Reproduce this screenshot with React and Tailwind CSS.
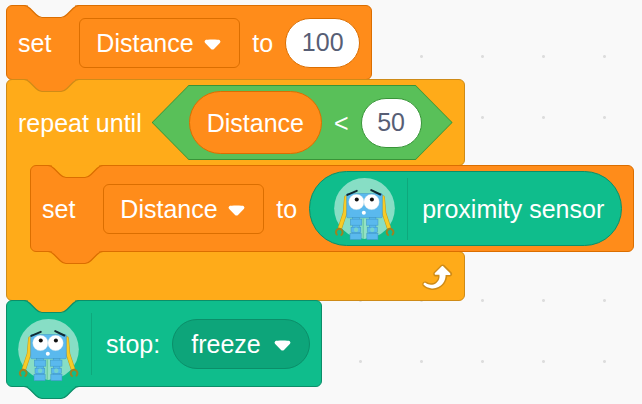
const DROPDOWN_ARROW =
  'M6.36,7.79a1.43,1.43,0,0,1-1-.42L1.42,3.45a1.44,1.44,0,0,1,0-2c0.56-.56,9.31-0.56,9.87,0a1.44,1.44,0,0,1,0,2L7.37,7.37A1.43,1.43,0,0,1,6.36,7.79Z';

// The connector between stacked blocks: a bump of one colour outlined in another.
function Notch({ side = 'top', className }) {
  const place = side === 'top' ? '-top-px' : '-bottom-[13px]';
  return (
    <svg
      aria-hidden="true"
      className={`pointer-events-none absolute left-[17px] z-10 overflow-visible ${place} ${className}`}
      width="55"
      height="13"
      viewBox="0 0 55 13"
    >
      <rect x="4" y="0" width="47" height="2" stroke="none" />
      <path
        d="M0 0.500c3 0 4.500 1.500 6 3l6 6c1.500 1.500 3 3 6 3h19c3 0 4.500-1.500 6-3l6-6c1.500-1.500 3-3 6-3"
        strokeWidth="1.200"
      />
    </svg>
  );
}

function Dropdown({ label, options, className }) {
  return (
    <span className="relative flex">
      <select
        aria-label={label}
        className={`h-[50px] appearance-none border text-white outline-none ${className}`}
      >
        {options.map((o) => (
          <option key={o}>{o}</option>
        ))}
      </select>
      <svg
        aria-hidden="true"
        className="pointer-events-none absolute right-[18px] top-[20px]"
        width="19"
        height="13"
        viewBox="0 0 12.71 8.79"
      >
        <path fill="#fff" d={DROPDOWN_ARROW} />
      </svg>
    </span>
  );
}

function NumberField({ label, value, className }) {
  return (
    <input
      type="text"
      inputMode="numeric"
      aria-label={label}
      defaultValue={value}
      className={`h-[50px] rounded-full border bg-white text-center text-[#575e75] outline-none ${className}`}
    />
  );
}

function Robot({ className = '' }) {
  return (
    <svg
      aria-hidden="true"
      className={`shrink-0 ${className}`}
      width="61"
      height="62"
      viewBox="0 0 180 184"
    >
      <circle cx="90" cy="90" r="90" fill="#87dec5" />
      <g fill="none" strokeLinecap="round" strokeLinejoin="round">
        <path d="M36 58L32 104L18 146" stroke="#c19a1f" strokeWidth="13" />
        <path d="M36 58L32 104L18 146" stroke="#f7cb27" strokeWidth="10" />
        <path d="M144 58L148 104L162 146" stroke="#c19a1f" strokeWidth="13" />
        <path d="M144 58L148 104L162 146" stroke="#f7cb27" strokeWidth="10" />
        <path d="M8 168a10 10 0 1 1 13 1" stroke="#9c8222" strokeWidth="6" />
        <path d="M160 169a10 10 0 1 1 13 -1" stroke="#9c8222" strokeWidth="6" />
      </g>
      <g fill="#5ab9ee" stroke="#3c93c4" strokeWidth="1.500">
        <rect x="37" y="46" width="106" height="72" rx="4" />
        <rect x="55" y="117" width="20" height="50" />
        <rect x="104" y="117" width="20" height="50" />
        <rect x="48" y="122" width="34" height="18" />
        <rect x="96" y="122" width="34" height="18" />
        <rect x="50" y="146" width="29" height="16" />
        <rect x="99" y="146" width="29" height="16" />
        <rect x="47" y="164" width="33" height="19" />
        <rect x="97" y="164" width="33" height="19" />
      </g>
      <rect x="59" y="147" width="12" height="13" rx="5" fill="#74d2cf" />
      <rect x="107" y="147" width="12" height="13" rx="5" fill="#74d2cf" />
      <path d="M88 120V180" stroke="#72cda4" strokeWidth="7" />
      <path d="M91 120V180" stroke="#a6ead1" strokeWidth="3" />
      <circle cx="66" cy="71" r="23" fill="#fff" stroke="#a9cfe2" strokeWidth="1" />
      <circle cx="111" cy="71" r="23" fill="#fff" stroke="#a9cfe2" strokeWidth="1" />
      <circle cx="67" cy="64" r="6" fill="#111" />
      <circle cx="112" cy="64" r="6" fill="#111" />
      <circle cx="88" cy="103" r="6" fill="#fff" />
      <path d="M39 50L67 38" fill="none" stroke="#0f2a33" strokeWidth="6" strokeLinecap="round" />
      <path d="M110 36L137 49" fill="none" stroke="#0f2a33" strokeWidth="6" strokeLinecap="round" />
    </svg>
  );
}

function LoopArrow() {
  return (
    <svg aria-hidden="true" width="37" height="37" viewBox="0 0 24 24">
      <path
        fill="#cf8b17"
        d="M23.3,11c-0.3,0.6-0.9,1-1.5,1h-1.6c-0.1,1.3-0.5,2.5-1.1,3.6c-0.9,1.7-2.3,3.2-4.1,4.1c-1.7,0.9-3.6,1.2-5.5,0.9c-1.8-0.3-3.5-1.1-4.9-2.3c-0.7-0.7-0.7-1.9,0-2.6c0.6-0.6,1.6-0.7,2.3-0.2H7c0.9,0.6,1.9,0.9,2.9,0.9s1.9-0.3,2.7-0.9c1.1-0.8,1.8-2.1,1.8-3.5h-1.5c-0.9,0-1.7-0.7-1.7-1.7c0-0.4,0.2-0.9,0.5-1.2l4.4-4.4c0.7-0.6,1.7-0.6,2.4,0L23,9.2C23.5,9.7,23.6,10.4,23.3,11z"
      />
      <path
        fill="#fff"
        d="M21.8,11h-2.6c0,1.5-0.3,2.9-1,4.2c-0.8,1.6-2.1,2.8-3.7,3.6c-1.5,0.8-3.3,1.1-4.9,0.8c-1.6-0.2-3.2-1-4.4-2.1c-0.4-0.3-0.4-0.9-0.1-1.2c0.3-0.4,0.9-0.4,1.2-0.1l0,0c1,0.7,2.2,1.1,3.4,1.1s2.3-0.3,3.3-1c0.9-0.6,1.6-1.5,2-2.6c0.3-0.9,0.4-1.8,0.2-2.8h-2.4c-0.4,0-0.7-0.3-0.7-0.7c0-0.2,0.1-0.3,0.2-0.4l4.4-4.4c0.3-0.3,0.7-0.3,0.9,0L22,9.8c0.3,0.3,0.4,0.6,0.3,0.9S22,11,21.8,11z"
      />
    </svg>
  );
}

function SetBlock({ above, children, className = '' }) {
  return (
    <div
      className={`relative flex w-max items-center gap-3 rounded-[6px] border border-[#db6e00] bg-[#ff8c1a] px-[11px] ${className}`}
    >
      <Notch className={above} />
      <span className="mr-4">set</span>
      <Dropdown
        label="Variable to set"
        options={['Distance']}
        className="w-[161px] rounded-[6px] border-[#db6e00] bg-[#ff8c1a] pl-4"
      />
      <span>to</span>
      {children}
    </div>
  );
}

function RepeatUntil({ condition, children }) {
  return (
    <div className="relative -mt-px grid w-max">
      <div className="relative flex items-center gap-[10px] rounded-[6px] rounded-bl-none border border-[#cf8b17] bg-[#ffab19] px-[11px] py-[5px]">
        <Notch className="fill-[#ff8c1a] stroke-[#cf8b17]" />
        <span>repeat until</span>
        {condition}
      </div>
      <div className="relative z-10 -my-px flex w-0">
        <div className="-mr-2 w-8 shrink-0 border-l border-[#cf8b17] bg-[#ffab19]" />
        {children}
      </div>
      <div className="flex h-[50px] items-center justify-end rounded-[6px] rounded-tl-none border border-[#cf8b17] bg-[#ffab19] pr-[11px]">
        <LoopArrow />
      </div>
    </div>
  );
}

function LessThan() {
  return (
    <div className="bg-[#389438] p-px [clip-path:polygon(37px_0,calc(100%-37px)_0,100%_50%,calc(100%-37px)_100%,37px_100%,0_50%)]">
      <div className="flex h-[73px] items-center gap-3 bg-[#59c059] pl-9 pr-[30px] [clip-path:polygon(36px_0,calc(100%-36px)_0,100%_50%,calc(100%-36px)_100%,36px_100%,0_50%)]">
        <span className="flex h-[63px] items-center rounded-full border border-[#db6e00] bg-[#ff8c1a] px-[17px]">
          Distance
        </span>
        <span>&lt;</span>
        <NumberField label="Compare with" value="50" className="w-[61px] border-[#389438]" />
      </div>
    </div>
  );
}

export default function App() {
  return (
    <main className="min-h-screen bg-[#f9f9f9] bg-[radial-gradient(circle,#dddddd_1px,transparent_2px)] bg-[length:61px_61px] bg-[position:25px_26px] pl-[6px] pt-[5px] font-['Liberation_Sans',Arial,sans-serif] text-[25px] leading-[30px] whitespace-nowrap text-white">
      <SetBlock above="fill-[#f9f9f9] stroke-[#db6e00]" className="h-[75px]">
        <NumberField label="Value" value="100" className="w-[75px] border-[#db6e00]" />
      </SetBlock>

      <RepeatUntil condition={<LessThan />}>
        <SetBlock above="fill-[#ffab19] stroke-[#db6e00]" className="h-[87px]">
          <div className="flex h-[75px] items-center gap-3 rounded-full border border-[#0b8e69] bg-[#0fbd8c] pl-6 pr-[17px]">
            <Robot />
            <div className="mr-0.5 h-[62px] w-px bg-[#0ea87c]" />
            <span>proximity sensor</span>
          </div>
          <Notch side="bottom" className="fill-[#ff8c1a] stroke-[#db6e00]" />
        </SetBlock>
      </RepeatUntil>

      <div className="relative -mt-px flex h-[87px] w-max items-center gap-3 rounded-[6px] border border-[#0b8e69] bg-[#0fbd8c] px-[11px]">
        <Notch className="fill-[#ffab19] stroke-[#0b8e69]" />
        <Robot className="mt-3" />
        <div className="mr-0.5 h-[62px] w-px bg-[#0ea87c]" />
        <span>stop:</span>
        <Dropdown
          label="Stop mode"
          options={['freeze']}
          className="w-[138px] rounded-full border-[#0b8e69] bg-[#0da57a] pl-[18px]"
        />
        <Notch side="bottom" className="fill-[#0fbd8c] stroke-[#0b8e69]" />
      </div>
    </main>
  );
}
